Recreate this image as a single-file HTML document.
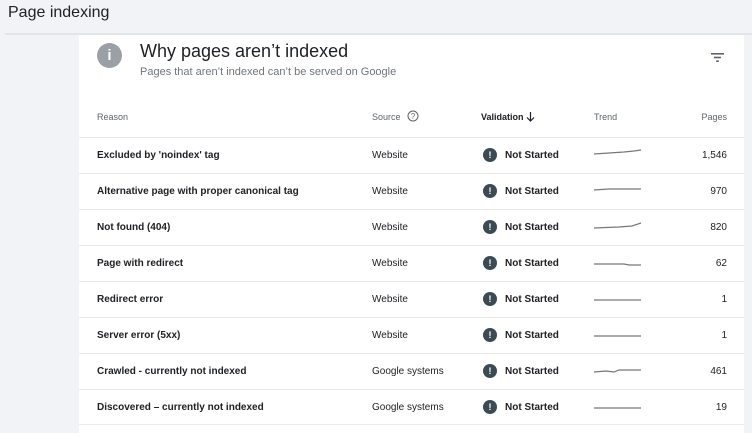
<!DOCTYPE html>
<html><head><style>
html,body{margin:0;width:752px;height:433px;overflow:hidden}
body{background:#f1f3f6;font-family:"Liberation Sans",Arial,sans-serif;position:relative}
.t{position:absolute;left:8px;top:4px;font-size:16px;color:#202124}
.hl{position:absolute;left:5px;right:0;top:33px;height:2px;background:#e1e4e8}
.card{position:absolute;left:79px;top:35px;width:665px;height:398px;background:#fff;overflow:hidden}
.ic{position:absolute;left:18px;top:8px;width:25px;height:25px;border-radius:50%;background:#9aa0a6;color:#fff;font-weight:bold;font-size:15px;text-align:center;line-height:25px}
.h{position:absolute;left:61px;top:6px;font-size:18px;color:#202124}
.s{position:absolute;left:61px;top:31px;font-size:11px;color:#70757a}
.row{position:absolute;left:0;width:665px;height:35px;border-top:1px solid #e8eaed;font-size:10px;color:#202124}
.row div{position:absolute;top:0;line-height:36px}
.r{left:18px;font-weight:bold}
.src{left:293px}
.val{left:404px;font-weight:bold}
.ex{display:inline-block;width:14px;height:14px;border-radius:50%;background:#3c4a53;color:#fff;text-align:center;line-height:14px;font-size:9px;vertical-align:middle;margin-right:8px}
.pg{right:17px}
.tr{left:515px}
.hdr{position:absolute;top:76px;left:0;width:665px;height:26px;font-size:9px;color:#5f6368}
.hdr span{position:absolute;top:0;line-height:12px}
</style></head><body>
<div class="t">Page indexing</div>
<div class="hl"></div>
<div class="card">
<div class="ic">i</div>
<div class="h">Why pages aren’t indexed</div>
<div class="s">Pages that aren’t indexed can’t be served on Google</div>
<svg style="position:absolute;left:632px;top:18px" width="13" height="9"><rect x="0" y="0" width="13" height="1.6" fill="#5f6368"/><rect x="3" y="3.7" width="7" height="1.6" fill="#5f6368"/><rect x="5.2" y="7.4" width="2.6" height="1.6" fill="#5f6368"/></svg>
<div class="hdr"><span style="left:18px">Reason</span><span style="left:293px">Source</span>
<svg style="position:absolute;left:328px;top:-1px" width="12" height="12"><circle cx="6" cy="6" r="5" fill="none" stroke="#5f6368" stroke-width="1"/><text x="6" y="9" font-size="8" text-anchor="middle" fill="#5f6368" font-family="Liberation Sans">?</text></svg>
<span style="left:402px;color:#202124;font-weight:bold">Validation</span>
<svg style="position:absolute;left:447px;top:1px" width="9" height="10"><path d="M4.5 0V9M1 5.5L4.5 9L8 5.5" fill="none" stroke="#202124" stroke-width="1.2"/></svg>
<span style="left:515px">Trend</span><span style="right:17px">Pages</span></div>
<div class="row" style="top:102px"><div class="r">Excluded by 'noindex' tag</div><div class="src">Website</div><div class="val"><span class="ex">!</span>Not Started</div><div class="tr"><svg width="48" height="35"><path d="M0 16L15 15L30 14L40 13L47 12" fill="none" stroke="#777" stroke-width="1.2"/></svg></div><div class="pg">1,546</div></div>
<div class="row" style="top:138px"><div class="r">Alternative page with proper canonical tag</div><div class="src">Website</div><div class="val"><span class="ex">!</span>Not Started</div><div class="tr"><svg width="48" height="35"><path d="M0 16L15 15L47 15" fill="none" stroke="#777" stroke-width="1.2"/></svg></div><div class="pg">970</div></div>
<div class="row" style="top:174px"><div class="r">Not found (404)</div><div class="src">Website</div><div class="val"><span class="ex">!</span>Not Started</div><div class="tr"><svg width="48" height="35"><path d="M0 18L25 17L38 16L47 13" fill="none" stroke="#777" stroke-width="1.2"/></svg></div><div class="pg">820</div></div>
<div class="row" style="top:210px"><div class="r">Page with redirect</div><div class="src">Website</div><div class="val"><span class="ex">!</span>Not Started</div><div class="tr"><svg width="48" height="35"><path d="M0 18L30 18L35 19L47 19" fill="none" stroke="#777" stroke-width="1.2"/></svg></div><div class="pg">62</div></div>
<div class="row" style="top:246px"><div class="r">Redirect error</div><div class="src">Website</div><div class="val"><span class="ex">!</span>Not Started</div><div class="tr"><svg width="48" height="35"><path d="M0 18L47 18" fill="none" stroke="#777" stroke-width="1.2"/></svg></div><div class="pg">1</div></div>
<div class="row" style="top:282px"><div class="r">Server error (5xx)</div><div class="src">Website</div><div class="val"><span class="ex">!</span>Not Started</div><div class="tr"><svg width="48" height="35"><path d="M0 18L47 18" fill="none" stroke="#777" stroke-width="1.2"/></svg></div><div class="pg">1</div></div>
<div class="row" style="top:318px"><div class="r">Crawled - currently not indexed</div><div class="src">Google systems</div><div class="val"><span class="ex">!</span>Not Started</div><div class="tr"><svg width="48" height="35"><path d="M0 18L12 17L20 18L25 16L47 16" fill="none" stroke="#777" stroke-width="1.2"/></svg></div><div class="pg">461</div></div>
<div class="row" style="top:354px;height:34px;border-bottom:1px solid #e8eaed"><div class="r">Discovered – currently not indexed</div><div class="src">Google systems</div><div class="val"><span class="ex">!</span>Not Started</div><div class="tr"><svg width="48" height="34"><path d="M0 18L47 18" fill="none" stroke="#777" stroke-width="1.2"/></svg></div><div class="pg">19</div></div>
</div>
</body></html>
